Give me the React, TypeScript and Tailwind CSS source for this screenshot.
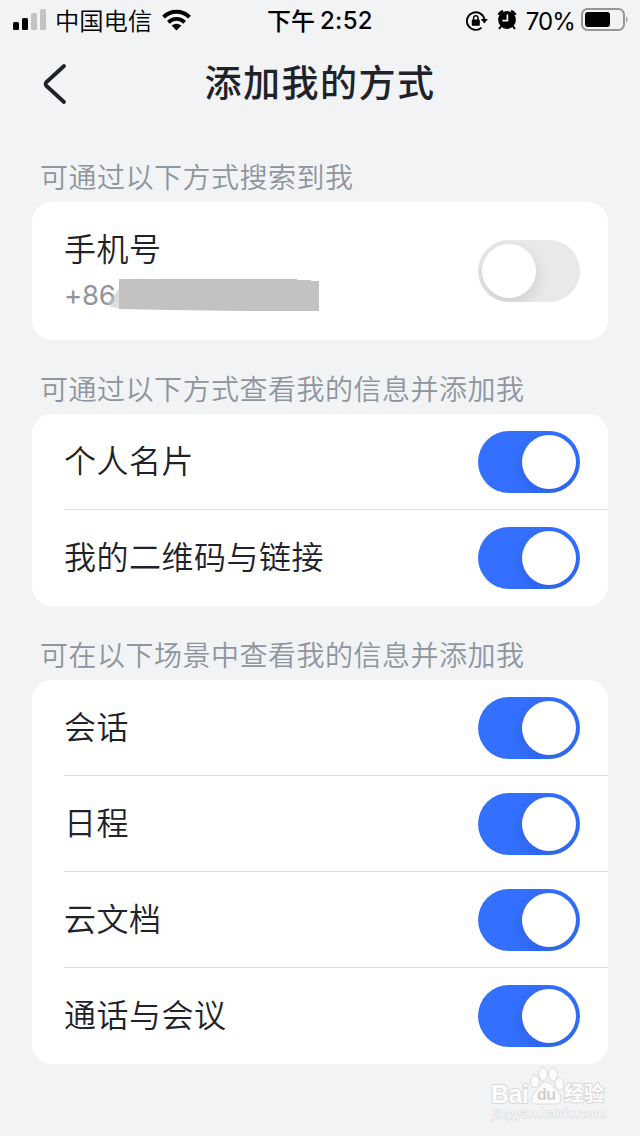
import clsx from 'clsx';

interface Row {
  label: string;
  enabled: boolean;
}

interface Section {
  title: string;
  rows: Row[];
}

const sections: Section[] = [
  {
    title: '可通过以下方式查看我的信息并添加我',
    rows: [
      { label: '个人名片', enabled: true },
      { label: '我的二维码与链接', enabled: true },
    ],
  },
  {
    title: '可在以下场景中查看我的信息并添加我',
    rows: [
      { label: '会话', enabled: true },
      { label: '日程', enabled: true },
      { label: '云文档', enabled: true },
      { label: '通话与会议', enabled: true },
    ],
  },
];

function StatusBar() {
  return (
    <header className="flex h-10 items-center pr-[11px] pl-[13px] text-black">
      <div className="flex w-[254px] items-center">
        <svg width="33" height="22" viewBox="0 0 33 22">
          <rect x="0" y="13" width="6" height="8" rx="1.5" />
          <rect x="9" y="9" width="6" height="12" rx="1.5" />
          <rect x="18" y="4" width="6" height="17" rx="1.5" fill="#c2c3c4" />
          <rect x="27" y="0" width="6" height="21" rx="1.5" fill="#c2c3c4" />
        </svg>
        <span className="ml-[9px] text-[24.3px] font-[350]">中国电信</span>
        <svg className="ml-[9px]" width="31" height="22" viewBox="0 0 31 22">
          <path d="M2.5 8.2 A18.5 18.5 0 0 1 28.5 8.2" fill="none" stroke="#000" strokeWidth="4" />
          <path d="M7.4 13.3 A11.5 11.5 0 0 1 23.6 13.3" fill="none" stroke="#000" strokeWidth="3.8" />
          <path d="M10.6 16.6 Q15.5 12.7 20.4 16.6 L15.5 21.5 Z" />
        </svg>
      </div>
      <div className="flex items-center gap-[5px] text-2xl font-medium">
        <span className="pb-px">下午</span>
        <span className="mt-0.5 font-[Inter] text-[24px] font-[550] tracking-[0.3px]">2:52</span>
      </div>
      <div className="ml-auto flex items-center">
        <svg className="mt-px" width="22" height="22" viewBox="0 0 22 22">
          <path d="M15.6 17.6 A8.8 8.8 0 1 1 18.4 9.6" fill="none" stroke="#000" strokeWidth="1.9" />
          <path d="M14.8 9 H21.8 L18.4 13.6 Z" />
          <rect x="5.8" y="9.6" width="8" height="6.2" rx="0.8" />
          <path d="M7.6 10 V8 a2.2 2.2 0 0 1 4.4 0 V10" fill="none" stroke="#000" strokeWidth="1.5" />
        </svg>
        <svg className="ml-[9px]" width="20" height="22" viewBox="0 0 20 22">
          <circle cx="10" cy="11" r="8.9" />
          <path d="M1.5 5.8 A9 9 0 0 1 6 1.8 M14 1.8 A9 9 0 0 1 18.5 5.8" fill="none" stroke="#000" strokeWidth="2.4" />
          <path d="M4.2 17.2 L2 20 M15.8 17.2 L18 20" stroke="#000" strokeWidth="2" />
          <path d="M10.4 5.6 V11.6 H5.4" fill="none" stroke="#f1f3f5" strokeWidth="1.7" />
        </svg>
        <span className="mt-[3px] ml-[9px] font-[Inter] text-[24px] tracking-[-0.9px]">70%</span>
        <svg className="ml-1.5" width="48" height="24" viewBox="0 0 48 24">
          <rect x="1" y="1" width="42" height="21" rx="5.5" fill="none" stroke="#959697" strokeWidth="2" />
          <rect x="4" y="4" width="25" height="15" rx="3" />
          <path d="M45 8 Q48 11.5 45 15 Z" fill="#959697" />
        </svg>
      </div>
    </header>
  );
}

function NavBar() {
  return (
    <nav className="grid h-[88px] grid-cols-[80px_1fr_80px] items-center">
      <svg className="ml-[42px]" width="26" height="42" viewBox="0 0 26 42">
        <path
          d="M22 3 L4 19.5 Q3 21 4 22.5 L22 39"
          fill="none"
          stroke="#1f2329"
          strokeWidth="3.8"
          strokeLinecap="round"
          strokeLinejoin="round"
        />
      </svg>
      <h1 className="pb-1 text-center text-[37px] font-medium tracking-[1.5px]">添加我的方式</h1>
    </nav>
  );
}

function SectionTitle({ children }: { children: string }) {
  return (
    <h2 className="flex h-[50px] items-center pb-0.5 pl-2 text-[28px] font-[350] tracking-[0.5px] whitespace-nowrap text-[#8f959e]">
      {children}
    </h2>
  );
}

function Toggle({ enabled }: { enabled: boolean }) {
  return (
    <button
      type="button"
      role="switch"
      aria-checked={enabled}
      className={clsx(
        'flex h-[62px] w-[102px] shrink-0 items-center overflow-hidden rounded-full p-1',
        enabled ? 'justify-end bg-[#3370ff]' : 'justify-start bg-[#e9e9eb]',
      )}
    >
      <span className="size-[54px] rounded-full bg-white shadow-[0_6px_16px_rgba(0,0,0,0.12)]" />
    </button>
  );
}

function SettingRow({ label, enabled, last }: Row & { last: boolean }) {
  return (
    <div
      className={clsx(
        'ml-8 flex h-24 items-center justify-between border-b pr-7',
        last ? 'border-transparent' : 'border-[#dcdee0]',
      )}
    >
      <span className="pb-1.5 text-[32px] font-[350] tracking-[0.5px]">{label}</span>
      <Toggle enabled={enabled} />
    </div>
  );
}

function Watermark() {
  return (
    <div className="absolute top-[1066px] left-[489px]">
      <svg width="120" height="62" viewBox="0 0 120 62" fill="#fcfcfc" stroke="#d9dadb" strokeWidth="1">
        <g fontWeight="bold" paintOrder="stroke" strokeWidth="2" strokeLinejoin="round">
          <text x="2" y="37" fontSize="25" fontFamily="'Liberation Sans', sans-serif" textLength="38">Bai</text>
          <text x="75" y="35" fontSize="20" fontFamily="'Noto Sans CJK SC', sans-serif" textLength="40">经验</text>
        </g>
        <ellipse cx="46" cy="15.5" rx="4.5" ry="6" />
        <ellipse cx="54" cy="8" rx="4.5" ry="6.5" />
        <ellipse cx="64" cy="8.5" rx="4.5" ry="6.5" />
        <ellipse cx="70.5" cy="18" rx="4.5" ry="6" />
        <path d="M57 16 C62 16 64 21 69 26 C75 33 71 39 65 38 H49 C43 39 40 33 46 26 C51 21 52 16 57 16 Z" />
        <text x="48" y="34" fontSize="16" fontWeight="bold" fontFamily="'Liberation Sans', sans-serif" fill="#cfd0d1" stroke="none" textLength="19">du</text>
        <text x="3" y="51.5" fontSize="12" fontFamily="'Open Sans', sans-serif" paintOrder="stroke" strokeWidth="1.2" textLength="114" lengthAdjust="spacingAndGlyphs">jingyan.baidu.com</text>
      </svg>
    </div>
  );
}

export default function App() {
  return (
    <div className="relative h-[1136px] w-[640px] overflow-hidden bg-[#f1f3f5] font-['Noto_Sans_CJK_SC',sans-serif] text-[#1f2329]">
      <StatusBar />
      <NavBar />
      <main className="flex flex-col px-8 pt-6">
        <section>
          <SectionTitle>可通过以下方式搜索到我</SectionTitle>
          <div className="flex h-[138px] items-center justify-between rounded-[20px] bg-white pr-7 pl-8">
            <div>
              <p className="text-[32px] leading-[43px] font-[350] tracking-[0.5px]">手机号</p>
              <div className="flex h-[47px] items-center pt-1 text-[#8f959e]">
                <span className="pt-0.5 font-[Inter] text-[27.5px] tracking-[-0.2px]">+86</span>
                {/* masked phone number */}
                <svg className="-ml-2" width="212" height="34" viewBox="0 0 212 34">
                  <path d="M0 24 L11 11 V30 Q4 30 0 27 Z" fill="#c4c4c4" opacity="0.6" />
                  <path d="M11 1 H189 V2 H203 V3 H211 V33 H140 L60 32 L11 31 Z" fill="#c2c2c2" />
                </svg>
              </div>
            </div>
            <Toggle enabled={false} />
          </div>
        </section>
        {sections.map(section => (
          <section key={section.title} className="pt-6">
            <SectionTitle>{section.title}</SectionTitle>
            <div className="rounded-[20px] bg-white">
              {section.rows.map((row, i) => (
                <SettingRow key={row.label} {...row} last={i === section.rows.length - 1} />
              ))}
            </div>
          </section>
        ))}
      </main>
      <Watermark />
    </div>
  );
}
